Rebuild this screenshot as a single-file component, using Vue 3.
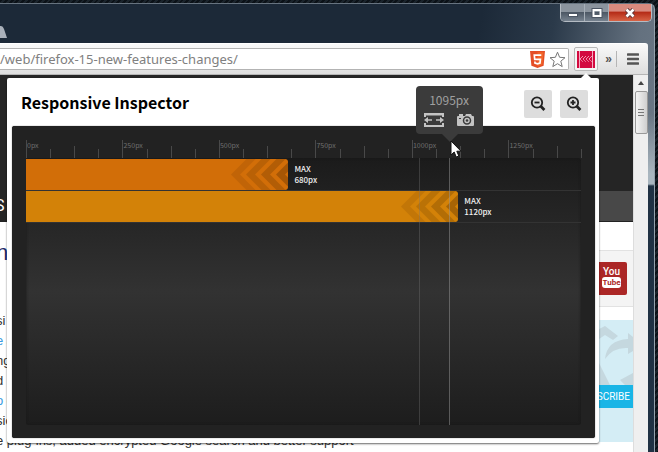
<script setup>
import { ref, computed } from 'vue'

const range = 1438
const url = ref('/web/firefox-15-new-features-changes/')
const hover = 1095
const marker = 1017

const percent = (px) => (px / range) * 100 + '%'

const ticks = computed(() => {
  const list = []
  for (let i = 0; i * 62.5 < range; i++) {
    const px = i * 62.5
    list.push({
      px,
      kind: i % 4 === 0 ? 'major' : i % 2 === 0 ? 'middle' : 'minor',
      label: i % 4 === 0 ? px + 'px' : ''
    })
  }
  return list
})

const queries = [
  { max: 680, tone: 'deep' },
  { max: 1120, tone: 'amber' }
]

const chevrons = [
  { x: 0, o: 0.1 },
  { x: 15, o: 0.15 },
  { x: 30, o: 0.2 },
  { x: 45, o: 0.27 }
]

const lines = [
  { link: '', text: 'si' },
  { link: 'e', text: ' a' },
  { link: '', text: 'ng' },
  { link: '', text: 'd' },
  { link: 'o', text: ' c' },
  { link: '', text: 'sic' },
  { link: '', text: 'e plug-ins, added encrypted Google search and better support' }
]
</script>

<template>
  <div class="desktop">
    <div class="window">
      <header class="titlebar">
        <svg class="tab-edge" viewBox="0 0 7 13" aria-hidden="true"><path d="M0 0h1q2 0 3 3l3 9H0z" fill="#a9b0ba" /></svg>
        <div class="controls">
          <button class="ctl min" aria-label="Minimize">
            <svg width="12" height="10" viewBox="0 0 12 10"><rect x="1.500" y="5.500" width="9" height="3" fill="#fff" stroke="#4c5664" /></svg>
          </button>
          <button class="ctl max" aria-label="Maximize">
            <svg width="12" height="10" viewBox="0 0 12 10"><path d="M2 1.500h8v7H2z" fill="none" stroke="#4c5664" stroke-width="3" /><path d="M2.500 2h7v6h-7z" fill="none" stroke="#fff" stroke-width="2" /></svg>
          </button>
          <button class="ctl close" aria-label="Close">
            <svg width="12" height="10" viewBox="0 0 12 10"><path d="M2.500 1.500l7 7M9.500 1.500l-7 7" stroke="#5d3437" stroke-width="4.500" /><path d="M2.500 1.500l7 7M9.500 1.500l-7 7" stroke="#fff" stroke-width="2.600" /></svg>
          </button>
        </div>
      </header>

      <div class="toolbar">
        <div class="omnibox">
          <input v-model="url" class="url" type="text" aria-label="Address" spellcheck="false" />
          <svg class="html5" viewBox="0 0 15 17" role="img" aria-label="HTML5">
            <path d="M0 0h15l-1.400 14.800L7.500 17l-6.100-2.200z" fill="#e44d26" />
            <path d="M7.500 1.300h6l-1.100 12.500-4.900 1.700z" fill="#f16529" />
            <path d="M11.300 4.100H4.300l.4 4.300h5.700l-.4 3.600-2.500.8-2.500-.8-.1-1.500" fill="none" stroke="#fff" stroke-width="1.700" />
          </svg>
          <button class="icon-btn" aria-label="Bookmark this page">
            <svg width="17" height="17" viewBox="0 0 17 17"><path d="M8.500 1.200l2.100 5.100 5.400.4-4.200 3.500 1.400 5.400-4.700-2.900-4.700 2.900 1.400-5.400L1 6.700l5.400-.4z" fill="#fff" stroke="#777" stroke-linejoin="round" /></svg>
          </button>
        </div>
        <button class="extension" aria-label="Responsive Inspector">
          <svg width="18" height="17" viewBox="0 0 18 17">
            <path d="M0 0h18v17H0z" fill="#d3093f" />
            <path d="M2.500 0v17M15.500 0v17" stroke="#f5a9bf" />
            <path d="M6 5L3 8l3 3M9 5L6 8l3 3M12 5L9 8l3 3M15 5l-3 3 3 3" fill="none" stroke="#ffd6e0" stroke-dasharray="1 .6" />
          </svg>
        </button>
        <button class="more" aria-label="More extensions">»</button>
        <button class="menu" aria-label="Menu">
          <svg width="12" height="12" viewBox="0 0 12 12"><path d="M1 1.500h10M1 6h10M1 10.500h10" stroke="#555" stroke-width="2.600" stroke-linecap="round" /></svg>
        </button>
      </div>

      <div class="viewport">
        <div class="page">
          <div class="masthead"></div>
          <nav class="nav"><span class="nav-item">S</span><span class="nav-fill"></span></nav>
          <div class="columns">
            <article class="article">
              <h2>n</h2>
              <p v-for="l in lines" :key="l.text"><a v-if="l.link" href="#">{{ l.link }}</a>{{ l.text }}</p>
            </article>
            <aside class="aside">
              <div class="social">
                <a class="youtube" href="#"><span>You</span><b>Tube</b></a>
              </div>
              <div class="subscribe">
                <svg class="share" viewBox="0 0 34 65" aria-hidden="true">
                  <path d="M0 19V9l6-3 13 10-5 4-8-5zM29 13l5 4v14l-5 3v-6Q14 27 6 39 8 20 29 19zM0 43l11 22H0zM21 60l13-7v12h-8z" fill="#c5d8df" />
                </svg>
                <a class="subscribe-link" href="#">SCRIBE</a>
              </div>
            </aside>
          </div>
        </div>
        <div class="scrollbar">
          <svg class="scroll-up" width="6" height="4" viewBox="0 0 6 4" aria-hidden="true"><path d="M0 4l3-4 3 4z" fill="#444" /></svg>
          <div class="thumb"><i></i><i></i><i></i></div>
        </div>

        <section class="popup">
          <svg class="popup-arrow" viewBox="0 0 12 7" aria-hidden="true"><path d="M0 7l6-6 6 6z" fill="#fff" /></svg>
          <header class="popup-head">
            <h1>Responsive Inspector</h1>
            <button class="zoom" aria-label="Zoom out">
              <svg width="16" height="16" viewBox="0 0 16 16"><g fill="none" stroke="#222" stroke-width="1.800"><circle cx="7" cy="6.500" r="5.200" /><path d="M4.500 6.500h5" /><path d="M10.800 10.300l3.600 3.700" stroke-width="2.800" /></g></svg>
            </button>
            <button class="zoom" aria-label="Zoom in">
              <svg width="16" height="16" viewBox="0 0 16 16"><g fill="none" stroke="#222" stroke-width="1.800"><circle cx="7" cy="6.500" r="5.200" /><path d="M4.500 6.500h5M7 4v5" /><path d="M10.800 10.300l3.600 3.700" stroke-width="2.800" /></g></svg>
            </button>
          </header>

          <div class="panel">
            <div class="ruler">
              <span v-for="t in ticks" :key="t.px" class="tick" :class="t.kind" :style="{ left: percent(t.px) }">{{ t.label }}</span>
            </div>
            <div class="chart">
              <div v-for="q in queries" :key="q.max" class="row">
                <div class="bar" :class="q.tone" :style="{ width: percent(q.max) }">
                  <svg width="57" height="31" viewBox="0 0 57 31" aria-hidden="true">
                    <path v-for="c in chevrons" :key="c.x" :transform="`translate(${c.x} 0)`" :fill-opacity="c.o" d="M0 15.500L15.500 0h9L9 15.500 24.500 31h-9z" fill="#301800" />
                  </svg>
                </div>
                <div class="caption">MAX<br />{{ q.max }}px</div>
              </div>
              <div class="guide dim" :style="{ left: percent(marker) }"></div>
              <div class="guide" :style="{ left: percent(hover) }"></div>
              <div class="tooltip" :style="{ left: percent(hover) }">
                <span class="tip-value">{{ hover }}px</span>
                <div class="tip-actions">
                  <button class="icon-btn" aria-label="Resize window">
                    <svg width="20" height="14" viewBox="0 0 20 14"><path d="M1 4V1h18v3M1 10v3h18v-3M1 1.500h18" fill="none" stroke="#c4c4c4" stroke-width="2" /><path d="M0 7l4-3v2.300h4v1.400H4V10zM20 7l-4-3v2.300h-4v1.400h4V10z" fill="#c4c4c4" /></svg>
                  </button>
                  <button class="icon-btn" aria-label="Take screenshot">
                    <svg width="17" height="14" viewBox="0 0 17 14"><path d="M1 3h1V1h4v2h2l1-2h5l1 2h1q1 0 1 1v8q0 1-1 1H1q-1 0-1-1V4q0-1 1-1z" fill="#c4c4c4" /><circle cx="10" cy="7.500" r="3.500" fill="none" stroke="#3b3b3b" stroke-width="1.500" /><circle cx="10" cy="7.500" r="1.300" fill="#3b3b3b" /><path d="M2 5.500h2" stroke="#3b3b3b" /></svg>
                  </button>
                </div>
                <svg class="tip-arrow" viewBox="0 0 18 9" aria-hidden="true"><path d="M0 0h18L9 9z" fill="#3b3b3b" /></svg>
                <svg class="cursor" viewBox="0 0 12 19" aria-hidden="true"><path d="M1 1v14l3.200-3 2 5 2.600-1-2-4.800H11z" fill="#fff" stroke="#111" /></svg>
              </div>
            </div>
          </div>
        </section>
      </div>
    </div>
  </div>
</template>

<style>
body {
  margin: 0;
  overflow: hidden;
}
</style>

<style scoped>
* {
  box-sizing: border-box;
}
button {
  padding: 0;
  border: 0;
  background: none;
  font: inherit;
}
svg {
  display: block;
}
h1, h2, p {
  margin: 0;
}
.desktop {
  height: 100vh;
  padding: 3px 3px 0 0;
  background: repeating-linear-gradient(135deg, #0b1117 0 2px, #1a232b 2px 4px);
  font-family: "Liberation Sans", sans-serif;
  overflow: hidden;
}
.window {
  display: flex;
  flex-direction: column;
  height: 100%;
  padding-right: 6px;
  border-top: 1px solid #67737f;
  border-right: 1px solid #94a1ab;
  border-radius: 0 6px 0 0;
  background: linear-gradient(180deg, transparent 0 110px, #a9b6bf 170px 180px, #203244 182px) right / 6px 100% no-repeat,
    linear-gradient(100deg, #1c2938 0 66%, #2b3a4a 76%, #64717f 88%, #75818e);
}
.titlebar {
  display: flex;
  justify-content: space-between;
  height: 39px;
  margin-right: -4px;
}
.tab-edge {
  width: 7px;
  height: 13px;
  margin-top: 22px;
}
.controls {
  display: flex;
  height: 18px;
  border: 1px solid #b4bbc3;
  border-top: 0;
  border-radius: 0 0 5px 5px;
  overflow: hidden;
}
.ctl {
  display: flex;
  align-items: center;
  justify-content: center;
  width: 24px;
  border-right: 1px solid #a6afb8;
  background: linear-gradient(#8b949e 45%, #4d5865 50%, #76828f);
}
.ctl.close {
  width: 42px;
  border: 0;
  background: linear-gradient(#d98a7e 40%, #b62d18 50%, #d76446);
}
.toolbar {
  display: flex;
  align-items: center;
  height: 32px;
  padding-right: 9px;
  border-top: 1px solid #fff;
  border-bottom: 1px solid #b5b5b5;
  border-radius: 0 3px 0 0;
  background: linear-gradient(#f9f9f9, #dedede);
}
.omnibox {
  display: flex;
  flex: 1;
  align-items: center;
  height: 22px;
  padding-right: 2px;
  border: 1px solid #b3b3b3;
  border-left: 0;
  border-radius: 0 2px 2px 0;
  background: #fff;
}
.url {
  flex: 1;
  min-width: 0;
  height: 20px;
  padding: 0;
  border: 0;
  outline: 0;
  background: none;
  color: #808080;
  font: 13px/20px "Noto Sans", sans-serif;
}
.html5 {
  width: 15px;
  height: 17px;
  margin-right: 4px;
}
.extension {
  display: flex;
  align-items: center;
  justify-content: center;
  width: 24px;
  height: 24px;
  margin-left: 5px;
  border: 1px solid #b8b8b8;
  border-radius: 2px;
  background: #f4f4f4;
}
.more {
  width: 19px;
  height: 16px;
  border-right: 1px solid #b5b5b5;
  color: #555;
  text-align: right;
  padding-right: 4px;
  font-size: 12px;
  line-height: 14px;
  font-weight: bold;
}
.menu {
  margin-left: 10px;
}
.viewport {
  position: relative;
  display: flex;
  flex: 1;
  min-height: 0;
}
.page {
  flex: 1;
  min-width: 0;
  background: #fff;
  overflow: hidden;
}
.masthead {
  height: 116px;
  background: #252525;
}
.nav {
  display: flex;
  height: 31px;
  border-bottom: 1px solid #222;
  background: #252525;
}
.nav-item {
  flex: 1;
  margin-left: -5px;
  color: #fff;
  font: 16px/30px Roboto, sans-serif;
}
.nav-fill {
  width: 40px;
  background: #484848;
}
.columns {
  display: flex;
}
.article {
  flex: 1;
  min-width: 0;
  margin-left: -4px;
  padding-top: 13px;
  color: #333;
  font-size: 13px;
  line-height: 20px;
  white-space: nowrap;
}
.article a {
  color: #3a9be0;
  text-decoration: none;
}
.article h2 {
  height: 76px;
  color: #1d2a6b;
  font-size: 22px;
  line-height: 36px;
  font-weight: normal;
}
.aside {
  width: 34px;
  padding-top: 28px;
}
.social {
  height: 57px;
  padding-top: 11px;
  border: 1px solid #e2e2e2;
  border-width: 1px 0;
  background: #f4f4f4;
}
.youtube {
  display: flex;
  flex-direction: column;
  align-items: center;
  width: 28px;
  height: 33px;
  padding: 4px 3px 0 0;
  border-radius: 0 2px 2px 0;
  background: #ab2726;
  color: #fff;
  font: 500 10px/11px Roboto, sans-serif;
  text-decoration: none;
}
.youtube b {
  padding: 0 1px;
  border-radius: 3px;
  background: #fff;
  color: #ab2726;
  font-size: 8px;
}
.subscribe {
  display: flex;
  flex-direction: column;
  height: 122px;
  margin-top: 13px;
  background: #d4edf5;
}
.share {
  width: 34px;
  height: 65px;
  overflow: hidden;
}
.subscribe-link {
  display: flex;
  justify-content: flex-end;
  height: 23px;
  padding-right: 3px;
  background: #19b5e6;
  color: #fff;
  font: 10px/24px Roboto, sans-serif;
  text-decoration: none;
}
.scrollbar {
  display: flex;
  flex-direction: column;
  align-items: center;
  width: 15px;
  padding-top: 6px;
  border-left: 1px solid #ddd;
  background: #efefef;
}
.thumb {
  display: flex;
  flex-direction: column;
  align-items: center;
  justify-content: center;
  gap: 2px;
  width: 13px;
  height: 43px;
  margin-top: 6px;
  border: 1px solid #999;
  border-radius: 2px;
  background: linear-gradient(90deg, #f4f4f4, #cfcfcf);
}
.thumb i {
  width: 6px;
  height: 1px;
  background: #777;
}
.popup {
  position: absolute;
  top: 3px;
  left: 7px;
  right: 49px;
  padding: 0 4px 5px 5px;
  border-radius: 2px;
  background: #fff;
  box-shadow: 0 1px 2px rgba(0, 0, 0, 0.6);
}
.popup-arrow {
  position: absolute;
  top: -6px;
  right: 7px;
  width: 12px;
  height: 7px;
}
.popup-head {
  display: flex;
  align-items: center;
  gap: 8px;
  height: 48px;
  padding: 3px 7px 0 9px;
}
.popup-head h1 {
  flex: 1;
  padding-bottom: 4px;
  color: #000;
  font: bold 16px/24px "Noto Sans CJK JP", sans-serif;
}
.zoom {
  display: flex;
  align-items: center;
  justify-content: center;
  width: 28px;
  height: 28px;
  border-radius: 2px;
  background: #ddd;
}
.panel {
  padding: 13px 13px 12px;
  border: 1px solid #222;
  border-radius: 2px;
  background: #222;
  box-shadow: 0 0 1px #333;
}
.ruler {
  position: relative;
  height: 18px;
}
.tick {
  position: absolute;
  bottom: 0;
  height: 9px;
  border-left: 1px solid #494949;
  color: #707070;
  font: 7px/10px "Noto Sans CJK JP", sans-serif;
}
.tick.middle {
  height: 12px;
}
.tick.major {
  height: 18px;
}
.chart {
  position: relative;
  min-height: 267px;
  padding-top: 1px;
  border-radius: 3px;
  background: linear-gradient(#1b1b1b, #323232 50%, #1d1d1d);
  box-shadow: inset 0 0 3px #181818;
}
.row {
  display: flex;
  height: 32px;
  border-bottom: 1px solid #333;
}
.bar {
  display: flex;
  justify-content: flex-end;
  border-radius: 0 3px 3px 0;
  overflow: hidden;
}
.bar.deep {
  background: #d26e08;
}
.bar.amber {
  background: #d38208;
}
.caption {
  padding: 4px 0 0 6px;
  color: #f0f0f0;
  font: 500 8px/11px "Noto Sans CJK JP", sans-serif;
}
.guide {
  position: absolute;
  top: 0;
  bottom: 0;
  width: 1px;
  background: rgba(150, 150, 150, 0.5);
}
.guide.dim {
  background: rgba(120, 120, 120, 0.35);
}
.tooltip {
  position: absolute;
  top: -72px;
  width: 67px;
  height: 48px;
  margin-left: -33px;
  padding-top: 5px;
  border-radius: 4px;
  background: #3b3b3b;
  color: #a0a0a0;
  text-align: center;
}
.tip-value {
  display: block;
  font: 12px/17px "Noto Sans CJK JP", sans-serif;
}
.tip-actions {
  display: flex;
  justify-content: center;
  gap: 13px;
  padding-top: 5px;
}
.tip-arrow {
  position: absolute;
  top: 47px;
  left: 25px;
  width: 18px;
  height: 9px;
}
.cursor {
  position: absolute;
  top: 54px;
  left: 34px;
  width: 12px;
  height: 19px;
}
</style>
